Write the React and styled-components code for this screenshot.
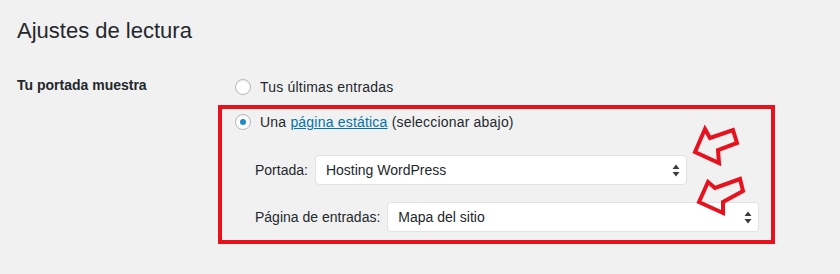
import React from 'react';
import styled, { createGlobalStyle } from 'styled-components';

const GlobalStyle = createGlobalStyle`
    body {
        margin: 0;
        background: #f1f1f1;
        font-family: "Liberation Sans", Arial, sans-serif;
        color: #23282d;
    }
`;

const Page = styled.div`
    width: 840px;
    height: 274px;
    padding: 0 0 0 17px;
    box-sizing: border-box;
    overflow: hidden;
`;

const Title = styled.h1`
    font-size: 22px;
    font-weight: 400;
    line-height: 29px;
    margin: 0;
    padding: 16px 0 0;
    color: #23282d;
`;

const FormRow = styled.div`
    display: grid;
    grid-template-columns: 201px 1fr;
    margin-top: 29px;
`;

const RowLabel = styled.div`
    font-size: 14px;
    font-weight: 700;
    line-height: 20px;
    padding-top: 1px;
`;

const Options = styled.div`
    display: flex;
    flex-direction: column;
`;

const Choice = styled.label`
    display: flex;
    align-items: center;
    gap: 9px;
    height: 26px;
    font-size: 14px;
    letter-spacing: 0.2px;
    margin-left: ${ props => props.indent || 0 }px;
`;

const Radio = styled.span`
    width: 16px;
    height: 16px;
    border-radius: 50%;
    border: 1px solid #b4b9be;
    background: #fff;
    box-sizing: border-box;
    box-shadow: inset 0 1px 2px rgba(0, 0, 0, 0.07);
    display: flex;
    align-items: center;
    justify-content: center;

    &::after {
        content: "";
        width: 6px;
        height: 6px;
        border-radius: 50%;
        background: ${ props => props.checked ? '#1e8cbe' : 'transparent' };
    }
`;

const Link = styled.a`
    color: #0073aa;
    text-decoration: underline;
`;

const Highlight = styled.div`
    position: relative;
    width: 557px;
    height: 139px;
    margin-top: 5px;
    border: 4px solid #e8121e;
    box-sizing: border-box;
    padding: 0 0 0 13px;
`;

const SelectList = styled.div`
    display: flex;
    flex-direction: column;
    gap: 17px;
    margin: 20px 0 0 20px;
`;

const SelectRow = styled.div`
    display: flex;
    align-items: center;
    gap: 7px;
    font-size: 14px;
`;

const Select = styled.div`
    width: 372px;
    height: 30px;
    box-sizing: border-box;
    background: #fff;
    border: 1px solid #e2e2e2;
    border-radius: 4px;
    display: flex;
    align-items: center;
    justify-content: space-between;
    padding: 0 6px 0 10px;
    font-size: 14px;
    color: #23282d;
`;

const Annotations = styled.svg`
    position: absolute;
    left: -4px;
    top: -4px;
    overflow: visible;
    pointer-events: none;
`;

const UpDown = () => (
    <svg width="8" height="13" viewBox="0 0 8 13">
        <path d="M4 0.5 L7.5 5 L0.5 5 Z M4 12.5 L7.5 8 L0.5 8 Z" fill="#3c3c3c" />
    </svg>
);

const arrows = [
    '477,47 487,24 492,33 515,25 519,38 500,45 501,58',
    '481,97 490,77 497,83 522,74 525,86 505,97 505,108',
];

const App = () => (
    <Page>
        <GlobalStyle />
        <Title>Ajustes de lectura</Title>

        <FormRow>
            <RowLabel>Tu portada muestra</RowLabel>

            <Options>
                <Choice indent={ 17 }>
                    <Radio />
                    Tus últimas entradas
                </Choice>

                <Highlight>
                    <Choice>
                        <Radio checked />
                        <span>Una <Link>página estática</Link> (seleccionar abajo)</span>
                    </Choice>

                    <SelectList>
                        <SelectRow>
                            Portada:
                            <Select>Hosting WordPress <UpDown /></Select>
                        </SelectRow>
                        <SelectRow>
                            Página de entradas:
                            <Select>Mapa del sitio <UpDown /></Select>
                        </SelectRow>
                    </SelectList>

                    <Annotations width="557" height="139">
                        { arrows.map(points => (
                            <polygon key={ points } points={ points } fill="none" stroke="#e8121e" strokeWidth="4" strokeLinejoin="miter" />
                        )) }
                    </Annotations>
                </Highlight>
            </Options>
        </FormRow>
    </Page>
);

export default App;
